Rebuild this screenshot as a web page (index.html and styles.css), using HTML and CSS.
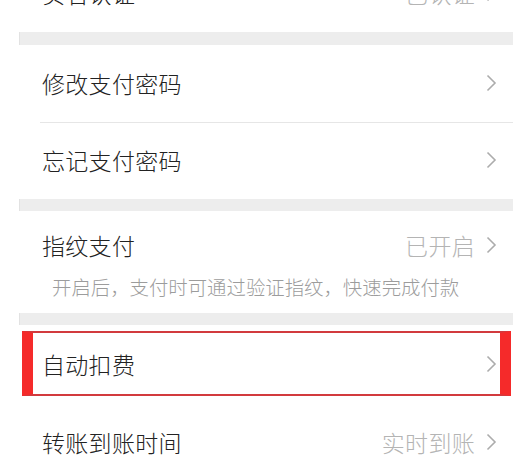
FILE: index.html
```html
<!DOCTYPE html>
<html lang="zh-CN">
<head>
<meta charset="utf-8">
<link rel="stylesheet" href="styles.css">
</head>
<body>
<div class="list">
  <div class="row">
    <span class="title">实名认证</span>
    <span class="value">已认证</span>
    <svg class="chev" viewBox="0 0 11 18"><path d="M1.5 1.5 L9 9 L1.5 16.5"/></svg>
  </div>
  <div class="band"></div>
  <div class="row">
    <span class="title">修改支付密码</span>
    <svg class="chev" viewBox="0 0 11 18"><path d="M1.5 1.5 L9 9 L1.5 16.5"/></svg>
  </div>
  <div class="divider"></div>
  <div class="row short">
    <span class="title">忘记支付密码</span>
    <svg class="chev" viewBox="0 0 11 18"><path d="M1.5 1.5 L9 9 L1.5 16.5"/></svg>
  </div>
  <div class="band thin"></div>
  <div class="block">
    <div class="row top">
      <span class="title">指纹支付</span>
      <span class="value">已开启</span>
      <svg class="chev" viewBox="0 0 11 18"><path d="M1.5 1.5 L9 9 L1.5 16.5"/></svg>
    </div>
    <div class="sub">开启后，支付时可通过验证指纹，快速完成付款</div>
  </div>
  <div class="band thin"></div>
  <div class="row highlighted">
    <span class="title">自动扣费</span>
    <svg class="chev" viewBox="0 0 11 18"><path d="M1.5 1.5 L9 9 L1.5 16.5"/></svg>
    <div class="mark"></div>
  </div>
  <div class="row">
    <span class="title">转账到账时间</span>
    <span class="value">实时到账</span>
    <svg class="chev" viewBox="0 0 11 18"><path d="M1.5 1.5 L9 9 L1.5 16.5"/></svg>
  </div>
</div>
</body>
</html>
```
FILE: styles.css
```css
html, body {
  margin: 0;
  padding: 0;
  background: #ffffff;
  overflow: hidden;
}
body {
  width: 513px;
  height: 471px;
  font-family: "Noto Sans CJK SC", "Noto Sans", sans-serif;
  font-weight: 300;
}
.list {
  margin-top: -45px;
  display: flex;
  flex-direction: column;
}
.row {
  position: relative;
  display: flex;
  align-items: center;
  height: 77px;
  padding: 0 16px 2px 42px;
  box-sizing: border-box;
}
.row.short {
  height: 76px;
}
.title {
  flex: 1;
  font-size: 23px;
  color: #222222;
  letter-spacing: 0.3px;
}
.value {
  font-size: 23px;
  color: #b4b4b4;
  margin-right: 11px;
  letter-spacing: 0.3px;
}
.chev {
  width: 11px;
  height: 18px;
  flex: none;
}
.chev path {
  fill: none;
  stroke: #acacac;
  stroke-width: 1.6;
}
.band {
  height: 13px;
  margin-left: 19px;
  background: #ededed;
  border-left: 1px solid #e2e2e2;
}
.band.thin {
  height: 12px;
}
.divider {
  height: 1px;
  margin-left: 40px;
  background: #e6e6e6;
}
.block {
  height: 102px;
}
.row.top {
  height: 70px;
}
.sub {
  margin-top: -5px;
  padding-left: 52px;
  font-size: 19.4px;
  line-height: 22px;
  color: #9c9c9c;
}
.row.highlighted {
  height: 79px;
}
.mark {
  position: absolute;
  left: 22px;
  right: 2px;
  top: 6px;
  height: 65px;
  box-sizing: border-box;
  border-left: 11px solid #f52a2a;
  border-right: 11px solid #f52a2a;
  border-top: 2px solid #d23a3e;
  border-bottom: 2px solid #d23a3e;
}
```
